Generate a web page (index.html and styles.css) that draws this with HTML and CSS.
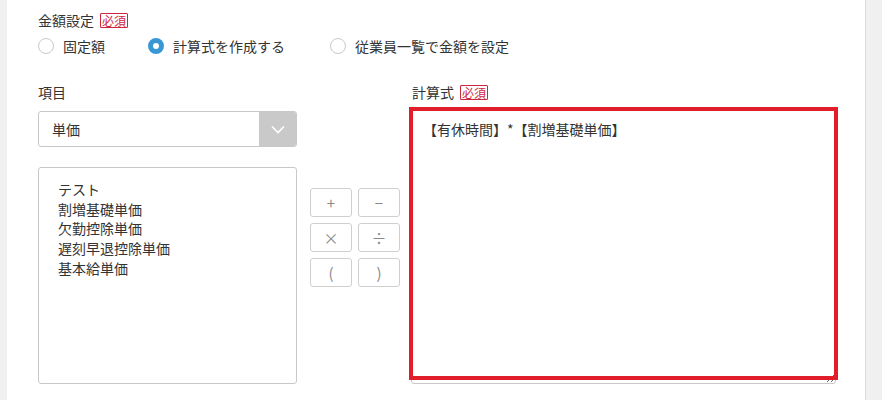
FILE: index.html
```html
<!DOCTYPE html>
<html lang="ja">
<head>
<meta charset="utf-8">
<link rel="stylesheet" href="styles.css">
</head>
<body>
<div class="panel">
  <div class="field-label">金額設定<span class="badge">必須</span></div>
  <div class="radios">
    <label class="radio"><span class="dot"></span>固定額</label>
    <label class="radio"><span class="dot on"></span>計算式を作成する</label>
    <label class="radio"><span class="dot"></span>従業員一覧で金額を設定</label>
  </div>
  <div class="editor">
    <div class="col-left">
      <div class="field-label sm">項目</div>
      <div class="select">
        <span class="select-text">単価</span>
        <span class="select-arrow"><svg width="14" height="9" viewBox="0 0 14 9"><path d="M1 1.5 L7 7.5 L13 1.5" fill="none" stroke="#fff" stroke-width="1.6"/></svg></span>
      </div>
      <div class="listbox">
        <div>テスト</div>
        <div>割増基礎単価</div>
        <div>欠勤控除単価</div>
        <div>遅刻早退控除単価</div>
        <div>基本給単価</div>
      </div>
    </div>
    <div class="ops">
      <button class="op">+</button>
      <button class="op">−</button>
      <button class="op">×</button>
      <button class="op">÷</button>
      <button class="op">(</button>
      <button class="op">)</button>
    </div>
    <div class="col-right">
      <div class="field-label sm">計算式<span class="badge">必須</span></div>
      <div class="ta-wrap">
        <textarea class="formula">【有休時間】*【割増基礎単価】</textarea>
        <div class="highlight"></div>
      </div>
    </div>
  </div>
</div>
</body>
</html>
```
FILE: styles.css
```css
html, body {
  margin: 0;
  padding: 0;
}
body {
  background: #f0f0f0;
  font-family: "Noto Sans CJK JP", "Noto Sans", sans-serif;
  font-size: 14px;
  color: #333;
  width: 882px;
  height: 400px;
  overflow: hidden;
}
.panel {
  margin-left: 7px;
  width: 859px;
  height: 400px;
  background: #fff;
  border-right: 1px solid #dcdcdc;
  padding: 10px 0 0 31px;
  box-sizing: border-box;
}
.field-label {
  display: flex;
  align-items: center;
  line-height: 20px;
  height: 20px;
}
.badge {
  margin-left: 6px;
  border: 1px solid #d0253e;
  color: #d0253e;
  font-size: 12px;
  line-height: 13px;
  padding: 0 1px;
  border-radius: 1px;
}
.radios {
  display: flex;
  margin-top: 6px;
  height: 20px;
  align-items: center;
}
.radio {
  display: flex;
  align-items: center;
  margin-right: 45px;
  line-height: 20px;
}
.radio:first-child {
  margin-right: 43px;
}
.dot {
  width: 16px;
  height: 16px;
  border-radius: 50%;
  border: 1px solid #c8c8c8;
  box-sizing: border-box;
  margin-right: 9px;
  background: #fff;
}
.dot.on {
  border: 5px solid #3a97d6;
  background: #fff;
}
.editor {
  display: flex;
  margin-top: 26px;
}
.col-left {
  width: 259px;
}
.select {
  margin-top: 9px;
  height: 36px;
  border: 1px solid #c8c8c8;
  border-radius: 3px;
  display: flex;
  box-sizing: border-box;
  overflow: hidden;
}
.select-text {
  flex: 1;
  padding-left: 13px;
  line-height: 34px;
}
.select-arrow {
  width: 37px;
  background: #c9c9c9;
  display: flex;
  align-items: center;
  justify-content: center;
}
.listbox {
  margin-top: 20px;
  height: 217px;
  border: 1px solid #c8c8c8;
  border-radius: 3px;
  box-sizing: border-box;
  padding: 12px 19px;
  line-height: 19.7px;
}
.ops {
  margin-left: 13px;
  margin-top: 106px;
  width: 90px;
  display: grid;
  grid-template-columns: 42px 42px;
  grid-auto-rows: 29px;
  column-gap: 6px;
  row-gap: 6px;
  align-content: start;
}
.op {
  border: 1px solid #cfcfcf;
  border-radius: 3px;
  background: #fff;
  color: #8a8a8a;
  font-family: "Noto Sans CJK JP", "Noto Sans", sans-serif;
  font-size: 15px;
  padding: 0;
  margin: 0;
}
.col-right {
  margin-left: 11px;
  width: 425px;
}
.col-right .field-label {
  padding-left: 1px;
}
.ta-wrap {
  position: relative;
  margin-top: 6px;
  height: 276px;
}
.formula {
  display: block;
  width: 100%;
  height: 276px;
  box-sizing: border-box;
  border: 1px solid #c8c8c8;
  border-radius: 3px;
  padding: 10px 11px;
  font-family: "Noto Sans CJK JP", "Noto Sans", sans-serif;
  font-size: 14px;
  line-height: 20px;
  color: #333;
  margin: 0;
}
.highlight {
  position: absolute;
  left: -2px;
  top: -1px;
  width: 429px;
  height: 273px;
  border: 4px solid #e11d2a;
  box-sizing: border-box;
  pointer-events: none;
}
```
